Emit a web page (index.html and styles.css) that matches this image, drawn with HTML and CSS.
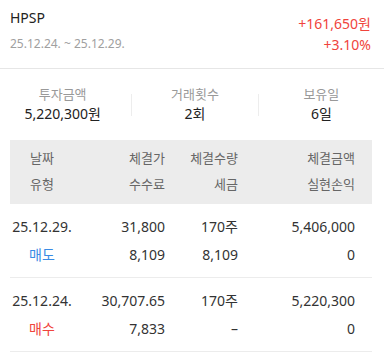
FILE: index.html
```html
<!DOCTYPE html>
<html lang="ko">
<head>
  <meta charset="UTF-8">
  <title>HPSP 거래내역</title>
  <link rel="stylesheet" href="styles.css">
</head>
<body>
  <div class="summary">
    <div class="summary-left">
      <div class="stock-name">HPSP</div>
      <div class="period">25.12.24. ~ 25.12.29.</div>
    </div>
    <div class="summary-right">
      <div class="profit">+161,650원</div>
      <div class="profit">+3.10%</div>
    </div>
  </div>

  <div class="stats">
    <div class="stat">
      <div class="stat-label">투자금액</div>
      <div class="stat-value">5,220,300원</div>
    </div>
    <div class="stat-sep"></div>
    <div class="stat">
      <div class="stat-label">거래횟수</div>
      <div class="stat-value">2회</div>
    </div>
    <div class="stat-sep"></div>
    <div class="stat">
      <div class="stat-label">보유일</div>
      <div class="stat-value">6일</div>
    </div>
  </div>

  <div class="trades">
    <div class="trade-row head">
      <span class="c1">날짜</span>
      <span class="c2">체결가</span>
      <span class="c3">체결수량</span>
      <span class="c4">체결금액</span>
      <span class="c1">유형</span>
      <span class="c2">수수료</span>
      <span class="c3">세금</span>
      <span class="c4">실현손익</span>
    </div>
    <div class="trade-row">
      <span class="c1">25.12.29.</span>
      <span class="c2">31,800</span>
      <span class="c3">170주</span>
      <span class="c4">5,406,000</span>
      <span class="c1 sell">매도</span>
      <span class="c2">8,109</span>
      <span class="c3">8,109</span>
      <span class="c4">0</span>
    </div>
    <div class="trade-row">
      <span class="c1">25.12.24.</span>
      <span class="c2">30,707.65</span>
      <span class="c3">170주</span>
      <span class="c4">5,220,300</span>
      <span class="c1 buy">매수</span>
      <span class="c2">7,833</span>
      <span class="c3">–</span>
      <span class="c4">0</span>
    </div>
  </div>
</body>
</html>
```

FILE: styles.css
```css
body {
  margin: 0;
  font-family: "Noto Sans", "Noto Sans CJK KR", sans-serif;
  background-color: #fff;
  color: #333;
}
.summary {
  display: flex;
  justify-content: space-between;
  padding: 8px 13px 0 10px;
  height: 60px;
  border-bottom: 1px solid #e6e6e6;
}
.stock-name {
  font-size: 14px;
  line-height: 20px;
  color: #222;
}
.period {
  margin-top: 7px;
  font-size: 12px;
  line-height: 18px;
  color: #a0a0a0;
}
.summary-right {
  text-align: right;
  padding-top: 5px;
}
.profit {
  font-size: 14px;
  line-height: 21px;
  color: #f0443c;
}
.stats {
  display: flex;
  align-items: center;
  padding: 16px 0 16px;
}
.stat {
  flex: 1;
  text-align: center;
}
.stat:first-child {
  padding-right: 6px;
}
.stat-label {
  font-size: 13px;
  line-height: 19px;
  color: #999;
}
.stat-value {
  font-size: 14px;
  line-height: 20px;
  color: #222;
}
.stat-sep {
  width: 1px;
  height: 22px;
  background-color: #ededed;
}
.trades {
  margin: 0 12px 0 10px;
}
.trade-row {
  display: grid;
  grid-template-columns: 64px 91px 73px 117px;
  padding: 9px 0 8px;
  font-size: 14px;
  line-height: 28px;
  border-bottom: 1px solid #ececec;
}
.trade-row.head {
  background-color: #ececec;
  padding: 5px 0 7px;
  font-size: 13px;
  line-height: 26px;
  color: #666;
  border-bottom: none;
}
.c1 {
  text-align: center;
}
.c2, .c3, .c4 {
  text-align: right;
}
.sell {
  color: #3a8be4;
}
.buy {
  color: #f0443c;
}
```
